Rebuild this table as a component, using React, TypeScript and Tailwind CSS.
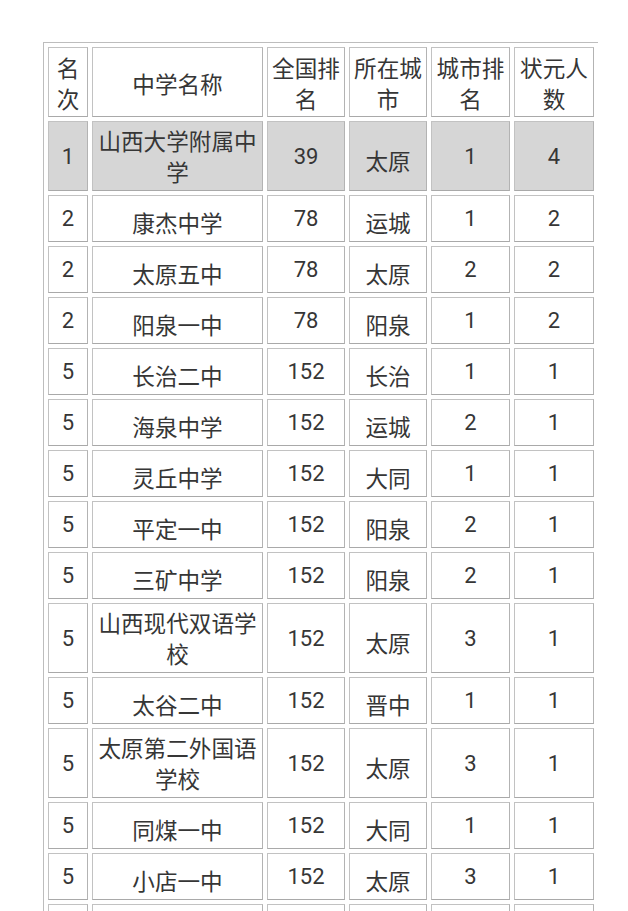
import React from "react";

type Row = { r: string; name: string; nat: string; city: string; cr: string; n: string; tall?: boolean; hl?: boolean };

const rows: Row[] = [
  { r: "1", name: "山西大学附属中学", nat: "39", city: "太原", cr: "1", n: "4", tall: true, hl: true },
  { r: "2", name: "康杰中学", nat: "78", city: "运城", cr: "1", n: "2" },
  { r: "2", name: "太原五中", nat: "78", city: "太原", cr: "2", n: "2" },
  { r: "2", name: "阳泉一中", nat: "78", city: "阳泉", cr: "1", n: "2" },
  { r: "5", name: "长治二中", nat: "152", city: "长治", cr: "1", n: "1" },
  { r: "5", name: "海泉中学", nat: "152", city: "运城", cr: "2", n: "1" },
  { r: "5", name: "灵丘中学", nat: "152", city: "大同", cr: "1", n: "1" },
  { r: "5", name: "平定一中", nat: "152", city: "阳泉", cr: "2", n: "1" },
  { r: "5", name: "三矿中学", nat: "152", city: "阳泉", cr: "2", n: "1" },
  { r: "5", name: "山西现代双语学校", nat: "152", city: "太原", cr: "3", n: "1", tall: true },
  { r: "5", name: "太谷二中", nat: "152", city: "晋中", cr: "1", n: "1" },
  { r: "5", name: "太原第二外国语学校", nat: "152", city: "太原", cr: "3", n: "1", tall: true },
  { r: "5", name: "同煤一中", nat: "152", city: "大同", cr: "1", n: "1" },
  { r: "5", name: "小店一中", nat: "152", city: "太原", cr: "3", n: "1" },
  { r: "5", name: "山西省实验中学", nat: "152", city: "太原", cr: "4", n: "1" },
];

const cjk = "font-['Noto_Sans_CJK_SC',sans-serif] text-[22.6px]";
const num = "font-['Roboto','Noto_Sans_CJK_SC',sans-serif] text-[22px]";

type Kind = "num" | "cjk1" | "cjk2" | "head";

function Cell({ children, kind, hl, h }: { children: React.ReactNode; kind: Kind; hl?: boolean; h: string }) {
  const shift =
    kind === "num" ? "top-0" : kind === "cjk1" ? "top-[4px]" : kind === "cjk2" ? "top-0" : "top-[1px]";
  return (
    <td
      className={`${h} border border-[#c2c2c2] border-b-[#a9a9a9] border-r-[#b3b3b3] px-[2px] text-center align-middle leading-[31px] text-[#363636] ${
        kind === "num" ? num : cjk
      } ${hl ? "bg-[#d6d6d6]" : "bg-white"}`}
    >
      <span className={`relative ${shift}`}>{children}</span>
    </td>
  );
}

export default function App() {
  return (
    <div className="w-[628px] h-[911px] overflow-hidden bg-white">
      <table className="ml-[43px] mt-[42px] border-separate border-spacing-[4px] border-t border-l border-[#bdbdbd] table-fixed w-[555px]">
        <colgroup>
          <col className="w-[40px]" />
          <col className="w-[171px]" />
          <col className="w-[78px]" />
          <col className="w-[78px]" />
          <col className="w-[79px]" />
          <col className="w-[80px]" />
        </colgroup>
        <thead>
          <tr>
            <Cell kind="head" h="h-[70px]">名次</Cell>
            <Cell kind="head" h="h-[70px]">中学名称</Cell>
            <Cell kind="head" h="h-[70px]">全国排名</Cell>
            <Cell kind="head" h="h-[70px]">所在城市</Cell>
            <Cell kind="head" h="h-[70px]">城市排名</Cell>
            <Cell kind="head" h="h-[70px]">状元人数</Cell>
          </tr>
        </thead>
        <tbody>
          {rows.map((row, i) => {
            const h = row.tall ? "h-[70px]" : "h-[47px]";
            return (
              <tr key={i}>
                <Cell h={h} kind="num" hl={row.hl}>{row.r}</Cell>
                <Cell h={h} kind={row.tall ? "cjk2" : "cjk1"} hl={row.hl}>{row.name}</Cell>
                <Cell h={h} kind="num" hl={row.hl}>{row.nat}</Cell>
                <Cell h={h} kind="cjk1" hl={row.hl}>{row.city}</Cell>
                <Cell h={h} kind="num" hl={row.hl}>{row.cr}</Cell>
                <Cell h={h} kind="num" hl={row.hl}>{row.n}</Cell>
              </tr>
            );
          })}
        </tbody>
      </table>
    </div>
  );
}
